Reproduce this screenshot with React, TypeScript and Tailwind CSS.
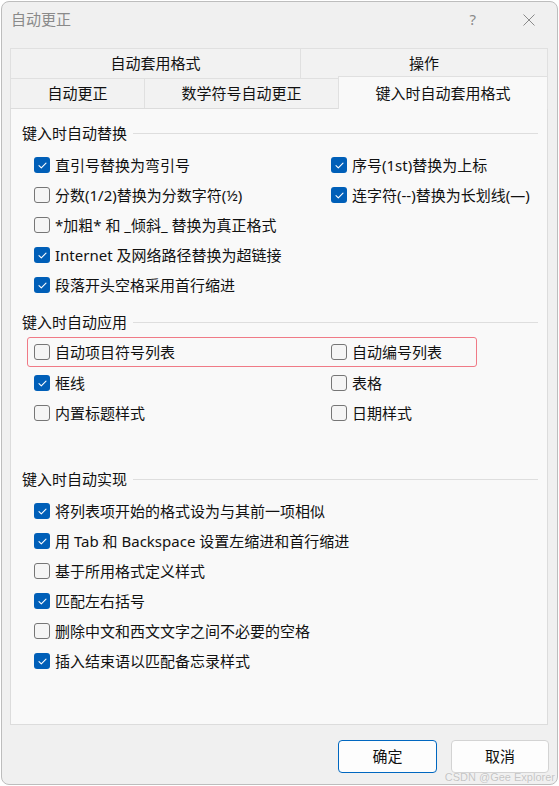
import React from 'react';

type Item = { label: string; checked: boolean };

function CheckBox({ checked }: { checked: boolean }) {
  return checked ? (
    <span className="flex w-[16px] h-[16px] shrink-0 items-center justify-center rounded-[3px] bg-[#005fb8]">
      <svg width="9" height="7" viewBox="0 0 9 7" fill="none">
        <path d="M1 3.6 L3.3 5.8 L8 1.2" stroke="white" strokeWidth="1.1" strokeLinecap="round" strokeLinejoin="round" />
      </svg>
    </span>
  ) : (
    <span className="block w-[16px] h-[16px] shrink-0 rounded-[3px] border border-[#767676] bg-[#f5f5f5]" />
  );
}

function Option({ label, checked }: Item) {
  return (
    <div className="flex h-[30px] items-center gap-[5px] whitespace-nowrap">
      <CheckBox checked={checked} />
      <span className="text-[15px] leading-none text-[#111]">{label}</span>
    </div>
  );
}

function SectionHead({ title }: { title: string }) {
  return (
    <div className="flex h-[24px] items-center gap-[6px] pl-[11px]">
      <span className="text-[15px] leading-none text-[#111] whitespace-nowrap">{title}</span>
      <div className="h-px flex-1 bg-[#dedede]" />
    </div>
  );
}

function TwoCol({ left, right }: { left: Item; right?: Item }) {
  return (
    <div className="grid grid-cols-[297px_1fr]">
      <Option {...left} />
      {right ? <Option {...right} /> : <div />}
    </div>
  );
}

const replaceRows: [Item, Item?][] = [
  [{ label: '直引号替换为弯引号', checked: true }, { label: '序号(1st)替换为上标', checked: true }],
  [{ label: '分数(1/2)替换为分数字符(½)', checked: false }, { label: '连字符(--)替换为长划线(—)', checked: true }],
  [{ label: '*加粗* 和 _倾斜_ 替换为真正格式', checked: false }],
  [{ label: 'Internet 及网络路径替换为超链接', checked: true }],
  [{ label: '段落开头空格采用首行缩进', checked: true }],
];

const doRows: Item[] = [
  { label: '将列表项开始的格式设为与其前一项相似', checked: true },
  { label: '用 Tab 和 Backspace 设置左缩进和首行缩进', checked: true },
  { label: '基于所用格式定义样式', checked: false },
  { label: '匹配左右括号', checked: true },
  { label: '删除中文和西文文字之间不必要的空格', checked: false },
  { label: '插入结束语以匹配备忘录样式', checked: true },
];

export default function App() {
  return (
    <div className="relative w-[559px] h-[786px] bg-white font-['Noto_Sans','Noto_Sans_CJK_SC',sans-serif] overflow-hidden">
      <div className="ml-[1px] mt-[1px] w-[557px] h-[784px] rounded-[8px] border border-[#bdbdbd] bg-[#f0f0f0] flex flex-col overflow-hidden">
        {/* title bar */}
        <div className="flex h-[35px] items-center justify-between pl-[9px] pr-[22px]">
          <span className="text-[15px] leading-none text-[#8a8a8a]">自动更正</span>
          <div className="flex items-center gap-[47px]">
            <span className="text-[15px] leading-none text-[#8a8a8a]">?</span>
            <svg width="12" height="12" viewBox="0 0 12 12">
              <path d="M0.5 0.5 L11.5 11.5 M11.5 0.5 L0.5 11.5" stroke="#8a8a8a" strokeWidth="1" />
            </svg>
          </div>
        </div>

        {/* tabs */}
        <div className="ml-[8px] mt-[11px] w-[538px] flex flex-col">
          <div className="flex h-[30px]">
            <div className="w-[290px] flex items-center justify-center border-t border-l border-[#e0e0e0] bg-[#f2f2f2] text-[15px] leading-none text-[#111]">自动套用格式</div>
            <div className="flex-1 flex items-center justify-center border-t border-l border-r border-[#e0e0e0] bg-[#f2f2f2] text-[15px] leading-none text-[#111]">操作</div>
          </div>
          <div className="flex h-[30px] items-end border-t border-[#e0e0e0]">
            <div className="w-[134px] h-[29px] flex items-center justify-center border-l border-[#e0e0e0] bg-[#f2f2f2] text-[15px] leading-none text-[#111]">自动更正</div>
            <div className="w-[194px] h-[29px] flex items-center justify-center border-l border-[#e0e0e0] bg-[#f2f2f2] text-[15px] leading-none text-[#111]">数学符号自动更正</div>
            <div className="relative z-10 -mb-px flex-1 h-[33px] flex items-center justify-center border-t border-l border-r border-[#e0e0e0] bg-[#f9f9f9] text-[15px] leading-none text-[#111]">键入时自动套用格式</div>
          </div>

          {/* panel */}
          <div className="h-[617px] border border-[#dcdcdc] bg-[#f9f9f9] pt-[12px] pr-[9px] flex flex-col">
            <SectionHead title="键入时自动替换" />
            <div className="mt-[5px] pl-[23px] flex flex-col">
              {replaceRows.map(([l, r], i) => (
                <TwoCol key={i} left={l} right={r} />
              ))}
            </div>

            <div className="mt-[10px]">
              <SectionHead title="键入时自动应用" />
            </div>
            <div className="mt-[3px] pl-[16px] flex flex-col">
              <div className="w-[450px] h-[30px] rounded-[3px] border border-[#f07a86] pl-[6px] flex items-center">
                <div className="grid grid-cols-[297px_1fr] w-full">
                  <Option label="自动项目符号列表" checked={false} />
                  <Option label="自动编号列表" checked={false} />
                </div>
              </div>
              <div className="pl-[7px] mt-[1px]">
                <TwoCol left={{ label: '框线', checked: true }} right={{ label: '表格', checked: false }} />
                <TwoCol left={{ label: '内置标题样式', checked: false }} right={{ label: '日期样式', checked: false }} />
              </div>
            </div>

            <div className="mt-[39px]">
              <SectionHead title="键入时自动实现" />
            </div>
            <div className="mt-[5px] pl-[23px] flex flex-col">
              {doRows.map((r, i) => (
                <Option key={i} {...r} />
              ))}
            </div>
          </div>
        </div>

        {/* buttons */}
        <div className="mt-[15px] flex justify-end gap-[14px] pr-[8px]">
          <button className="w-[99px] h-[33px] rounded-[4px] border border-[#0067c0] bg-[#fdfdfd] text-[15px] leading-none text-[#111]">确定</button>
          <button className="w-[98px] h-[33px] rounded-[4px] border border-[#d3d3d3] bg-[#fdfdfd] text-[15px] leading-none text-[#111]">取消</button>
        </div>
      </div>

      <span className="absolute right-[4px] bottom-[3px] text-[11px] leading-none text-[#c4c4c4] font-['Liberation_Sans',sans-serif] [text-shadow:0_0_1px_white]">CSDN @Gee Explorer</span>
    </div>
  );
}
